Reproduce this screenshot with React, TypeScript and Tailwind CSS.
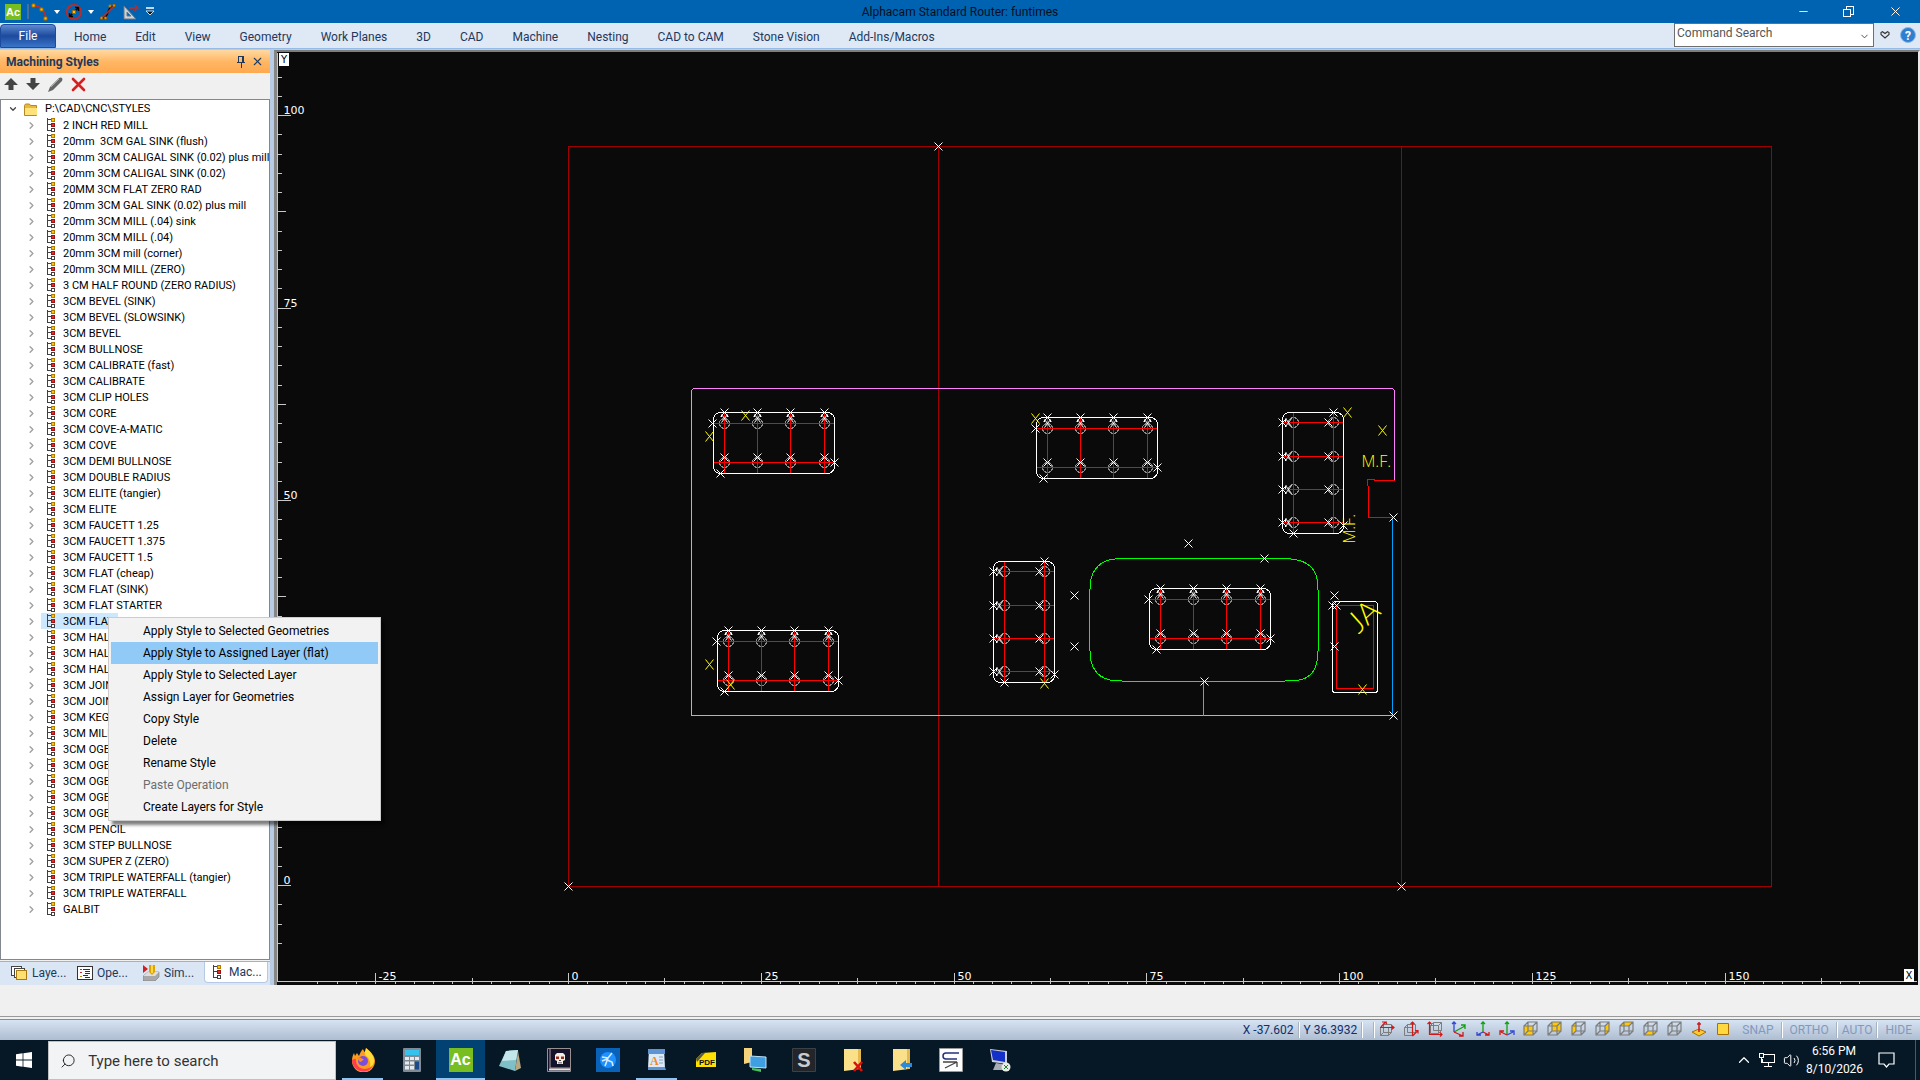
import { Fragment, ReactNode } from 'react'
import { ChevronDown, ChevronRight, ChevronUp, Minus, Search, Volume2, X } from 'lucide-react'

const ribbonTabs = [
  'Home', 'Edit', 'View', 'Geometry', 'Work Planes', '3D', 'CAD', 'Machine', 'Nesting',
  'CAD to CAM', 'Stone Vision', 'Add-Ins/Macros',
]

const styles = [
  '2 INCH RED MILL',
  '20mm  3CM GAL SINK (flush)',
  '20mm 3CM CALIGAL SINK (0.02) plus mill',
  '20mm 3CM CALIGAL SINK (0.02)',
  '20MM 3CM FLAT ZERO RAD',
  '20mm 3CM GAL SINK (0.02) plus mill',
  '20mm 3CM MILL (.04) sink',
  '20mm 3CM MILL (.04)',
  '20mm 3CM mill (corner)',
  '20mm 3CM MILL (ZERO)',
  '3 CM HALF ROUND (ZERO RADIUS)',
  '3CM BEVEL (SINK)',
  '3CM BEVEL (SLOWSINK)',
  '3CM BEVEL',
  '3CM BULLNOSE',
  '3CM CALIBRATE (fast)',
  '3CM CALIBRATE',
  '3CM CLIP HOLES',
  '3CM CORE',
  '3CM COVE-A-MATIC',
  '3CM COVE',
  '3CM DEMI BULLNOSE',
  '3CM DOUBLE RADIUS',
  '3CM ELITE (tangier)',
  '3CM ELITE',
  '3CM FAUCETT 1.25',
  '3CM FAUCETT 1.375',
  '3CM FAUCETT 1.5',
  '3CM FLAT (cheap)',
  '3CM FLAT (SINK)',
  '3CM FLAT STARTER',
  '3CM FLAT',
  '3CM HAL',
  '3CM HAL',
  '3CM HAL',
  '3CM JOIN',
  '3CM JOIN',
  '3CM KEG',
  '3CM MILL',
  '3CM OGE',
  '3CM OGE',
  '3CM OGE',
  '3CM OGE',
  '3CM OGE',
  '3CM PENCIL',
  '3CM STEP BULLNOSE',
  '3CM SUPER Z (ZERO)',
  '3CM TRIPLE WATERFALL (tangier)',
  '3CM TRIPLE WATERFALL',
  'GALBIT',
]

const menuItems = [
  'Apply Style to Selected Geometries',
  'Apply Style to Assigned Layer (flat)',
  'Apply Style to Selected Layer',
  'Assign Layer for Geometries',
  'Copy Style',
  'Delete',
  'Rename Style',
  'Paste Operation',
  'Create Layers for Style',
]

/* ---------- title bar ---------- */

function AcLogo({ className }: { className: string }) {
  return (
    <span className={`flex items-center justify-center bg-[#78be20] font-['Liberation_Sans'] font-bold text-white ${className}`}>
      Ac
    </span>
  )
}

function SmallCaret() {
  return (
    <svg width="6" height="4" viewBox="0 0 6 4" className="fill-white">
      <path d="M0 0h6L3 4z" />
    </svg>
  )
}

function TitleBar() {
  return (
    <header className="relative flex h-[23px] items-center bg-[#0063b1]">
      <div className="flex items-center pl-[5px]">
        <AcLogo className="size-4 text-[11px]" />
        <span className="ml-1.5 h-[15px] w-0.5 border border-[#4a6f9c] bg-[#0a4f92]" />
        <button aria-label="Arc" className="ml-0.5">
          <svg width="18" height="18" viewBox="0 0 18 18" fill="none">
            <path d="M3 3c7 0 11 5 12 13" stroke="#c22a24" strokeWidth="1.6" />
            <path d="M1 1h3v3H1zM9 5h3v3H9zM13 14h3v3h-3z" fill="#ffc400" stroke="#a86800" />
          </svg>
        </button>
        <button aria-label="Arc options" className="mx-[5px]"><SmallCaret /></button>
        <button aria-label="Circle">
          <svg width="18" height="18" viewBox="0 0 18 18" fill="none">
            <circle cx="9" cy="9" r="7.2" stroke="#c22a24" strokeWidth="1.8" />
            <path d="M5 13l8-8M10 4.5h3.5V8M4.5 10v3.5H8" stroke="#000" strokeWidth="1.4" />
            <path d="M7.5 7.5h3v3h-3z" fill="#ffc400" stroke="#a86800" />
          </svg>
        </button>
        <button aria-label="Circle options" className="mx-[5px]"><SmallCaret /></button>
        <button aria-label="Spline">
          <svg width="18" height="18" viewBox="0 0 18 18" fill="none">
            <path d="M2 15c5 0 6-3 7-6s3-6 6-6" stroke="#000" strokeWidth="1.6" />
            <path d="M3 15L15 3" stroke="#c22a24" strokeWidth="1.6" />
            <path d="M1.5 14h2v2h-2zM14 1.5h2v2h-2zM5.5 14h2v2h-2zM10 2h2v2h-2z" fill="#ffc400" stroke="#a86800" />
          </svg>
        </button>
        <button aria-label="Set square" className="ml-[5px]">
          <svg width="18" height="18" viewBox="0 0 18 18" fill="none">
            <path d="M2 3v13h12z" fill="#c9d2dc" stroke="#6b7683" />
            <path d="M5 9v4h4z" fill="#0063b1" stroke="#6b7683" />
            <path d="M7 5h7M12.5 2L16 5l-3.5 3" stroke="#c22a24" strokeWidth="1.4" />
          </svg>
        </button>
        <button aria-label="Customize toolbar" className="ml-1.5">
          <svg width="8" height="9" viewBox="0 0 8 9">
            <path d="M0 1h8" stroke="#fff" strokeWidth="1.5" />
            <path d="M0 4h8L4 8z" fill="#111" stroke="#fff" strokeWidth=".8" />
          </svg>
        </button>
      </div>
      <h1 className="pointer-events-none absolute inset-x-0 text-center text-[12px] text-[#04101f]">
        Alphacam Standard Router: funtimes
      </h1>
      <div className="ml-auto flex h-full items-center text-white">
        <button aria-label="Minimize" className="flex w-[45px] justify-center"><Minus size={13} strokeWidth={1.6} /></button>
        <button aria-label="Restore" className="flex w-[45px] justify-center">
          <svg width="11" height="11" viewBox="0 0 11 11" fill="none" stroke="#fff" shapeRendering="crispEdges">
            <path d="M.5 3h7v7.5h-7zM3 3V.5h7.5V8H8" />
          </svg>
        </button>
        <button aria-label="Close" className="flex w-[49px] justify-center"><X size={15} strokeWidth={1.6} /></button>
      </div>
    </header>
  )
}

/* ---------- ribbon ---------- */

function Ribbon() {
  return (
    <nav className="flex h-[26px] items-start border-b border-[#96bbe6] bg-[#dfe8f5]">
      <button className="mt-px h-6 w-14 rounded-t-sm border border-[#1c4a9c] bg-linear-to-b from-[#5d8ad0] via-[#1d4a9d] to-[#3a75c8] text-[12px] text-white">
        File
      </button>
      <div className="flex h-full items-center gap-px pt-0.5 pl-1">
        {ribbonTabs.map((tab) => (
          <button key={tab} className="px-[14px] text-[12px] leading-6 whitespace-nowrap text-[#1e395b]">{tab}</button>
        ))}
      </div>
      <div className="ml-auto flex items-center gap-1.5 pr-1">
        <div className="relative flex">
          <select
            aria-label="Command Search"
            className="h-6 w-[200px] appearance-none border border-[#6e6e6e] bg-white pb-1 pl-0.5 text-[12px] text-[#555]"
          >
            <option>Command Search</option>
          </select>
          <ChevronDown size={11} className="absolute top-2 right-1 text-[#444]" />
        </div>
        <button aria-label="Ribbon options">
          <svg width="10" height="8" viewBox="0 0 10 8" fill="none" stroke="#333" strokeWidth="1.1">
            <path d="M1 1.5L2.5.7 5 2.5 7.5.7 9 1.5v2L5 7 1 3.5z" />
          </svg>
        </button>
        <button aria-label="Help" className="ml-1">
          <svg width="16" height="16" viewBox="0 0 16 16">
            <circle cx="8" cy="8" r="7.5" fill="#2f7fd0" stroke="#8db9e6" />
            <text x="8" y="12.5" textAnchor="middle" fill="#fff" fontSize="12" fontWeight="700">?</text>
          </svg>
        </button>
      </div>
    </nav>
  )
}

/* ---------- machining styles panel ---------- */

function StyleIcon() {
  return (
    <svg width="9" height="16" viewBox="0 0 9 16" shapeRendering="crispEdges" className="shrink-0">
      <path d="M.5 1v12.5H5M.5 2.5H5M.5 7.5H5" fill="none" stroke="#404040" />
      <path d="M4.5 1.5h3v3h-3z" fill="#ffc400" stroke="#b07a00" />
      <path d="M4.5 6.5h3v3h-3z" fill="#e03030" stroke="#a01010" />
      <path d="M4.5 11.5h3v3h-3z" fill="#fff" stroke="#404040" />
    </svg>
  )
}

function FolderIcon() {
  return (
    <svg width="14" height="13" viewBox="0 0 14 13" className="shrink-0">
      <path d="M.5 12.5V2.5l1-1.5h4l1 1.5h6v10z" fill="#e8b93c" stroke="#b48a20" />
      <path d="M1 5h12v7H1z" fill="#ffe27a" />
    </svg>
  )
}

function ContextMenu() {
  return (
    <ul role="menu" className="absolute top-1 left-[107px] z-10 w-[273px] border border-[#ccc] bg-[#f2f2f2] p-0.5 shadow-[4px_4px_3px_rgba(0,0,0,0.5)]">
      {menuItems.map((item, i) => (
        <li key={item}>
          <button
            role="menuitem"
            disabled={item === 'Paste Operation'}
            className={`h-[22px] w-full pl-8 text-left text-[12px] whitespace-nowrap disabled:text-[#6d6d6d] ${i === 1 ? 'bg-[#91c9f7]' : ''}`}
          >
            {item}
          </button>
        </li>
      ))}
    </ul>
  )
}

const panelTabs: { label: string; icon: ReactNode }[] = [
  {
    label: 'Laye...',
    icon: (
      <svg width="17" height="16" viewBox="0 0 17 16" shapeRendering="crispEdges">
        <path d="M.5 1.5h10v9H.5z" fill="#fff" stroke="#444" />
        <path d="M3.5 3.5h10v9h-10z" fill="#fff" stroke="#444" />
        <path d="M5.5 5.5h10v9h-10z" fill="#ffdf70" stroke="#a87a10" />
      </svg>
    ),
  },
  {
    label: 'Ope...',
    icon: (
      <svg width="16" height="14" viewBox="0 0 16 14" shapeRendering="crispEdges">
        <path d="M.5.5h15v13H.5z" fill="#fff" stroke="#333" />
        <path d="M3 3.5h2M3 6.5h2" stroke="#d02020" />
        <path d="M3 10.5h2" stroke="#c08000" />
        <path d="M6 3.5h7M8 5.5h5M8 7.5h5M6 9.5h5M8 11.5h5" stroke="#333" />
      </svg>
    ),
  },
  {
    label: 'Sim...',
    icon: (
      <svg width="17" height="16" viewBox="0 0 17 16">
        <path d="M0 0l5 4-5 4z" fill="#d02020" />
        <path d="M0 11l5-4h11v5l-4 4H0z" fill="#a8a8a8" stroke="#777" strokeWidth=".6" />
        <path d="M0 11l5-4h11l-4 4z" fill="#dedede" />
        <path d="M6 0h6v7l-3 3-3-3z" fill="#e0a400" />
        <path d="M8 0h2v8H8z" fill="#ffd84a" />
      </svg>
    ),
  },
  { label: 'Mac...', icon: <StyleIcon /> },
]

function StylesPanel() {
  return (
    <aside className="flex w-[270px] shrink-0 flex-col bg-[#f0f0f0]">
      <div className="flex h-[23px] items-center bg-linear-to-b from-[#ffd9a0] via-[#ffb765] to-[#ffa94f] pr-1.5 pl-[6px]">
        <h2 className="text-[12px] font-bold text-[#1e395b]">Machining Styles</h2>
        <button aria-label="Pin" className="ml-auto">
          <svg width="8" height="12" viewBox="0 0 8 12" fill="none" stroke="#1e395b" shapeRendering="crispEdges">
            <path d="M1.5 6V.5h5V6M5.5 1v5M0 6.5h8M4 7v5" />
          </svg>
        </button>
        <button aria-label="Close panel" className="ml-1.5"><X size={13} className="text-[#1e395b]" /></button>
      </div>
      <div className="flex h-[26px] items-center gap-2 pb-1 pl-1 text-[#444]">
        <button aria-label="Move up">
          <svg width="14" height="14" viewBox="0 0 14 14" fill="#444"><path d="M7 1l7 7H9.500v5h-5V8H0z" /></svg>
        </button>
        <button aria-label="Move down">
          <svg width="14" height="14" viewBox="0 0 14 14" fill="#444"><path d="M7 13l7-7H9.500V1h-5v5H0z" /></svg>
        </button>
        <button aria-label="Edit style">
          <svg width="15" height="15" viewBox="0 0 15 15">
            <path d="M0 15l2-5 9-9q2-1 3 0t0 3l-9 9z" fill="#666" />
            <path d="M3 10l8-8" stroke="#aaa" />
          </svg>
        </button>
        <button aria-label="Delete style">
          <svg width="15" height="15" viewBox="0 0 15 15" stroke="#d81e1e" strokeWidth="2.6" strokeLinecap="round">
            <path d="M2 2l11 11M13 2L2 13" />
          </svg>
        </button>
      </div>
      <div className="flex-1 border border-[#828790] bg-white py-px text-[11px] leading-[18px] text-black">
        <div className="flex h-4 items-center pl-[7px]">
          <ChevronDown size={10} strokeWidth={3} className="text-[#444]" />
          <span className="ml-1.5"><FolderIcon /></span>
          <span className="ml-[7px]">P:\CAD\CNC\STYLES</span>
        </div>
        <ul>
          {styles.map((name, i) => (
            <li key={i} className="relative flex h-4 items-center pl-[25px]">
              <ChevronRight size={11} strokeWidth={3} className="shrink-0 text-[#a0a0a0]" />
              <span className={`ml-1 flex h-4 items-center pr-1 pl-1.5 ${name === '3CM FLAT' ? 'bg-[#cce8ff]' : ''}`}>
                <StyleIcon />
                <span className="ml-[7px] pt-px whitespace-pre">{name}</span>
              </span>
              {name === '3CM FLAT' && <ContextMenu />}
            </li>
          ))}
        </ul>
      </div>
      <div className="mt-px flex h-[24px] border-t border-[#8fb4e8] bg-[#dbe6f4] pl-1.5">
        {panelTabs.map((tab, i) => (
          <button
            key={tab.label}
            className={`flex h-[21px] items-center text-[12px] text-[#1e395b] ${i === 3 ? 'mr-0.5 flex-1 gap-[7px] rounded-b border border-t-0 border-[#b5c9e4] bg-white pl-2' : 'w-[66px] gap-1 pl-[5px]'}`}
          >
            {tab.icon}
            {tab.label}
          </button>
        ))}
      </div>
    </aside>
  )
}

/* ---------- drawing area ---------- */

const ORIGIN_X = 568
const ORIGIN_Y = 885
const UNIT_X = 7.71
const UNIT_Y = 7.7

function Cross({ x, y, color = '#fff', w = 4, h = 4 }: { x: number; y: number; color?: string; w?: number; h?: number }) {
  return (
    <path
      d={`M${x - w} ${y - h}L${x + w} ${y + h}M${x + w} ${y - h}L${x - w} ${y + h}`}
      stroke={color}
      shapeRendering="geometricPrecision"
    />
  )
}

function YellowMark({ x, y }: { x: number; y: number }) {
  return <Cross x={x} y={y} color="#ff0" h={5} />
}

// suction pod layout, 4 x 2 holes
function PodWide({ x, y }: { x: number; y: number }) {
  const cols = [11, 44, 77, 111]
  return (
    <g transform={`translate(${x} ${y})`}>
      {cols.map((c) => (
        <Fragment key={c}>
          <circle cx={c} cy="11" r="5" stroke="#8c8c8c" />
          <circle cx={c} cy="50" r="5" stroke="#8c8c8c" />
          <path d={`M${c} 0V61`} stroke="#f00" />
        </Fragment>
      ))}
      <path d="M0 11H121M0 50H121" stroke="#f00" />
      <rect width="121" height="61" rx="7" stroke="#fff" />
      {cols.map((c) => (
        <Fragment key={c}>
          <Cross x={c} y={0} />
          <Cross x={c} y={6} w={3} />
          <Cross x={c} y={45} />
          <path d={`M${c - 3} 2v2M${c + 3} 2v2`} stroke="#fff" />
        </Fragment>
      ))}
      <Cross x={-1} y={11} />
      <Cross x={121} y={50} />
      <Cross x={7} y={61} />
    </g>
  )
}

function PodTall({ x, y }: { x: number; y: number }) {
  const rows = [10, 44, 77, 110]
  return (
    <g transform={`translate(${x} ${y})`}>
      {rows.map((r) => (
        <Fragment key={r}>
          <circle cx="11" cy={r} r="5" stroke="#8c8c8c" />
          <circle cx="51" cy={r} r="5" stroke="#8c8c8c" />
          <path d={`M0 ${r}H61`} stroke="#f00" />
        </Fragment>
      ))}
      <path d="M11 0V121M51 0V121" stroke="#f00" />
      <rect width="61" height="121" rx="7" stroke="#fff" />
      {rows.map((r) => (
        <Fragment key={r}>
          <Cross x={0} y={r} />
          <Cross x={6} y={r} w={3} />
          <Cross x={46} y={r} />
          <path d={`M3 ${r - 3}v2M3 ${r + 2}v2`} stroke="#fff" />
        </Fragment>
      ))}
      <Cross x={51} y={0} />
      <Cross x={61} y={113} />
      <Cross x={11} y={121} />
    </g>
  )
}

function Rulers() {
  const yTicks = Array.from({ length: 46 }, (_, i) => i - 3)
  const xTicks = Array.from({ length: 81 }, (_, i) => i - 13)
  return (
    <g stroke="#c8c8c8">
      <path d="M277 52V981H1916" />
      {yTicks.map((i) => {
        const y = Math.round(ORIGIN_Y - i * 2.5 * UNIT_Y)
        const len = i % 10 === 0 ? 13 : i % 5 === 0 ? 8 : 4
        return <path key={i} d={`M277 ${y}h${len}`} />
      })}
      {xTicks.map((i) => {
        const x = Math.round(ORIGIN_X + i * 2.5 * UNIT_X)
        const top = i % 10 === 0 ? 972 : i % 5 === 0 ? 977 : 981
        return <path key={i} d={`M${x} ${top}V983`} />
      })}
      <g fill="#fff" stroke="none" fontFamily="DejaVu Sans" fontSize="11">
        {[0, 50, 75, 100].map((v) => (
          <text key={v} x="283" y={Math.round(ORIGIN_Y - v * UNIT_Y) - 2}>{v}</text>
        ))}
        {[-25, 0, 25, 50, 75, 100, 125, 150].map((v) => (
          <text key={v} x={Math.round(ORIGIN_X + v * UNIT_X) + 3} y="979">{v}</text>
        ))}
      </g>
    </g>
  )
}

function Drawing() {
  return (
    <svg viewBox="277 52 1641 933" className="h-full w-full" fill="none" shapeRendering="crispEdges">
      <g transform="translate(.5 .5)">
        <Rulers />

        {/* slabs */}
        <path d="M568 146H1771V886H568ZM938 146V886M1401 146V886" stroke="#a00000" />

        {/* countertop outline */}
        <path d="M1393 715H691V390L693 388H1392L1394 390V480" stroke="#ff80ff" />
        <path d="M1394 480H1374V479H1367V485L1368 486V517H1393" stroke="#f00" />
        <path d="M1392 517V715" stroke="#00a0ff" />

        {/* sink cutout */}
        <path
          d="M1119 558H1288L1299 560C1312 564 1316 572 1317 581L1318 597V643L1317 658C1315 673 1306 680 1293 680L1277 681H1131L1112 680C1099 678 1092 669 1090 658L1089 643V597L1090 581C1092 568 1101 561 1110 559Z"
          stroke="#0f0"
        />
        <path d="M1203 681V715" stroke="#0f0" />

        <PodWide x={713} y={412} />
        <PodWide x={717} y={630} />
        <PodWide x={1036} y={417} />
        <PodWide x={1149} y={588} />
        <PodTall x={993} y={561} />
        <PodTall x={1282} y={412} />

        <rect x="1332" y="601" width="45" height="91" rx="3" stroke="#fff" />
        <path d="M1336 605H1373V688H1336Z" stroke="#f00" />

        {[
          [1074, 595], [1074, 646], [1188, 543], [1264, 558], [1204, 681], [1334, 595], [1334, 646],
          [1332, 605], [1336, 605], [1393, 517], [1393, 715], [938, 146], [568, 886], [1401, 886],
        ].map(([x, y]) => <Cross key={`${x}-${y}`} x={x} y={y} />)}

        {[
          [745, 415], [709, 436], [709, 664], [730, 684], [1035, 418], [1044, 683], [1347, 412],
          [1382, 430], [1362, 689],
        ].map(([x, y]) => <YellowMark key={`${x}-${y}`} x={x} y={y} />)}

        <g fill="#ff0" fontFamily="Open Sans" fontSize="16" fontWeight="300">
          <text x="1361" y="466">M.F.</text>
          <text transform="translate(1354 543) rotate(-90)">M.F.</text>
          <text transform="translate(1358 634) rotate(-42)" fontFamily="Lato" fontSize="30">JA</text>
        </g>
      </g>
    </svg>
  )
}

function Workspace() {
  return (
    <main className="relative min-w-0 flex-1 border-t-2 border-r-2 border-l-3 border-t-[#7d7d7d] border-r-[#e8e8e8] border-l-[#868686] bg-[#0a0a0a]">
      <Drawing />
      <span className="absolute top-px left-0.5 flex h-[13px] w-2.5 items-center justify-center bg-white font-['DejaVu_Sans'] text-[10px] text-black">Y</span>
      <span className="absolute right-1 bottom-[3px] flex h-[13px] w-2.5 items-center justify-center bg-white font-['DejaVu_Sans'] text-[10px] text-black">X</span>
    </main>
  )
}

/* ---------- status bar ---------- */

const faces = {
  front: 'M1 5h9v9H1z',
  back: 'M5 1h9v9H5z',
  left: 'M1 5l4-4v9l-4 4z',
  right: 'M10 5l4-4v9l-4 4z',
  top: 'M1 5l4-4h9l-4 4z',
  bottom: 'M1 14l4-4h9l-4 4z',
  none: '',
}

function Cube({ face, children }: { face: keyof typeof faces; children?: ReactNode }) {
  return (
    <svg width="16" height="16" viewBox="0 0 16 16" fill="none">
      <path d={faces[face]} fill="#ffc800" />
      <path d="M1 5h9v9H1zM5 1h9v9H5zM1 5l4-4M10 5l4-4M1 14l4-4M10 14l4-4" stroke="#7d7d7d" strokeWidth="1.2" />
      {children}
    </svg>
  )
}

// wire cube with a pair of work plane arrows over it
function PlaneCube({ cube, arrows }: { cube: string; arrows: string }) {
  return (
    <svg width="16" height="16" viewBox="0 0 16 16" fill="none">
      <path d={cube} stroke="#7d7d7d" />
      <path d={arrows} stroke="#d01818" strokeWidth="1.2" />
    </svg>
  )
}

function Axes({ blue, green, red }: { blue: string; green: string; red: string }) {
  return (
    <svg width="16" height="16" viewBox="0 0 16 16" fill="none" strokeWidth="1.3">
      <path d={blue} stroke="#3048d0" />
      <path d={green} stroke="#10a010" />
      <path d={red} stroke="#d01818" />
    </svg>
  )
}

const viewButtons: { label: string; icon: ReactNode }[] = [
  {
    label: 'Work plane XY',
    icon: <PlaneCube cube="M1.5 6.5h8v8h-8zM4.500 3.5h8v8h-8M4.500 3.5v8M9.500 14.500l3-3M1.500 14.500l3-3" arrows="M1 6.500h14M12.500 4.500l2.500 2-2.500 2M2 6l4-4.500M3 1h5M6 1l2 2" />,
  },
  {
    label: 'Work plane XZ',
    icon: <PlaneCube cube="M1.500 6.500h8v8h-8zM4.500 3.500h8v8h-8M4.500 3.500v8M1.500 6.500l3-3" arrows="M9.500 15V1M7.500 3l2-2 2 2M9.500 15l5-5M12 9.500h3v3" />,
  },
  {
    label: 'Work plane YZ',
    icon: <PlaneCube cube="M3.500 4.500h8v8h-8zM6.500 1.500h8v8h-8zM3.500 4.500l3-3M11.500 4.500l3-3M11.500 12.500l3-3" arrows="M2.500 1v12.500H15M.5 3l2-2 2 2M13 11.500l2 2-2 2" />,
  },
  { label: 'Axes 1', icon: <Axes blue="M3 11V1M1 3l2-2 2 2" green="M3 11l11-6M10 4h4v4" red="M3 11l9 4M12 11v4H8" /> },
  { label: 'Axes 2', icon: <Axes blue="M8 11l-6 3M2 11v3h4" green="M8 11V1M6 3l2-2 2 2" red="M8 11l6 3M14 11v3h-4" /> },
  { label: 'Axes 3', icon: <Axes blue="M8 14l6-3M11 10h4v4" green="M8 14V1M6 3l2-2 2 2" red="M8 14l-6-3M5 10H1v4" /> },
  { label: 'Front', icon: <Cube face="front" /> },
  { label: 'Back', icon: <Cube face="back" /> },
  { label: 'Left', icon: <Cube face="left" /> },
  { label: 'Right', icon: <Cube face="right" /> },
  { label: 'Top', icon: <Cube face="top" /> },
  { label: 'Bottom', icon: <Cube face="bottom" /> },
  { label: 'Wireframe', icon: <Cube face="none" /> },
  {
    label: 'Normal to plane',
    icon: (
      <svg width="16" height="16" viewBox="0 0 16 16">
        <path d="M1 11l7-3 7 3-7 4z" fill="#ffc830" stroke="#a87000" />
        <path d="M8 11V1M6 3h4" stroke="#d01818" strokeWidth="1.5" />
      </svg>
    ),
  },
  {
    label: 'Shaded',
    icon: (
      <svg width="16" height="16" viewBox="0 0 16 16">
        <path d="M2.5 2.5h11v11h-11z" fill="#ffd840" stroke="#a87000" />
      </svg>
    ),
  },
]

function Separator() {
  return <span className="h-4 w-0.5 border-l border-[#a9b3c0] bg-white" />
}

function StatusBar() {
  return (
    <footer>
      <div className="h-[31px] bg-[#f0f0f0]" />
      <div className="flex h-6 items-center justify-end border-t border-[#999] bg-linear-to-b from-[#dde9f8] to-[#aebdd1] pr-2 text-[12px] text-[#10306a] shadow-[inset_0_2px_0_#f0f0f0,inset_0_3px_0_#6f8fc4]">
        <div className="flex items-center gap-1 pt-0.5">
          <span>X -37.602</span>
          <Separator />
          <span>Y 36.3932</span>
          <Separator />
          <span className="w-0.5" />
          <Separator />
        </div>
        <div className="flex">
          {viewButtons.map((b) => (
            <button key={b.label} aria-label={b.label} className="flex w-6 justify-center">{b.icon}</button>
          ))}
        </div>
        <div className="flex items-center pt-0.5 text-[#8299bd]">
          <button className="px-[7px]">SNAP</button>
          <Separator />
          <button className="px-[7px]">ORTHO</button>
          <Separator />
          <button className="px-1">AUTO</button>
          <Separator />
          <button className="pl-[7px]">HIDE</button>
        </div>
      </div>
    </footer>
  )
}

/* ---------- taskbar ---------- */

const apps: { name: string; icon: ReactNode; running?: boolean; active?: boolean }[] = [
  {
    name: 'Firefox',
    running: true,
    icon: (
      <svg width="24" height="24" viewBox="0 0 24 24">
        <path d="M12 1c0 0 1 3 3 4 1-1 0-4-0-5 5 4 9 8 9 13a11.500 11.500 0 0 1-23 0c0-4 1-6 2-8l1 3 2-3 2 3c1-3 2-5 4-7z" fill="#ff9a1f" />
        <path d="M15 0c5 4 8 8 8 13 0 3-2 5-4 6 1-5-1-9-4-11-2-2-1-5 0-8z" fill="#ffdc3a" />
        <path d="M1 12c0 6 5 11.500 11.500 11.500 4 0 7-2 9-5-7 4-14 3-16-3l-1-5z" fill="#ff3d4e" />
        <circle cx="12" cy="13" r="5" fill="#7a4fe0" />
        <path d="M6 10c3-1 5 0 7 2-2 0-2 2-4 2z" fill="#ff8a1c" />
      </svg>
    ),
  },
  {
    name: 'Calculator',
    icon: (
      <svg width="24" height="24" viewBox="0 0 24 24">
        <rect x="3" width="18" height="24" rx="1" fill="#7f8a94" />
        <path d="M5 2h14v5H5z" fill="#35c3ee" />
        <path d="M5 9h4v3H5zM10 9h4v3h-4zM15 9h4v3h-4zM5 13.500h4v3H5zM10 13.500h4v3h-4zM5 18h4v3.500H5zM10 18h4v3.500h-4z" fill="#e5e9ed" />
        <path d="M15 13.500h4v8h-4z" fill="#1a4a8a" />
      </svg>
    ),
  },
  { name: 'Alphacam', running: true, active: true, icon: <AcLogo className="size-6 text-[16px]" /> },
  {
    name: 'Notepad',
    icon: (
      <svg width="24" height="24" viewBox="0 0 24 24">
        <path d="M20 3l3 17-6 3z" fill="#b8a880" />
        <path d="M8 3l12-1-3 21-16-5z" fill="#7fc0c8" />
        <path d="M8 3l12-1-2 10L4 13z" fill="#c3e6ea" />
      </svg>
    ),
  },
  {
    name: 'Skull book',
    icon: (
      <svg width="24" height="24" viewBox="0 0 24 24">
        <path d="M.5.5h23v23H.5z" fill="#14112b" stroke="#9a8f8f" />
        <path d="M3 1v19h20" fill="none" stroke="#b0a0a0" />
        <path d="M2 20.500h21v2H2z" fill="#e8e4e0" />
        <path d="M10 5h6l2 2v5l-2 1v3h-6v-3l-2-1V7z" fill="#f0ece6" />
        <path d="M9 8.500h3v2.500H9zM14 8.500h3v2.500h-3z" fill="#a02818" />
        <path d="M12 12h2v1h-2zM11 14.500h4v.8h-4z" fill="#333" />
      </svg>
    ),
  },
  {
    name: 'Kinetic',
    icon: (
      <svg width="24" height="24" viewBox="0 0 24 24">
        <path d="M0 0h24v24H0z" fill="#0a62b8" />
        <circle cx="12" cy="12" r="8" fill="#1e90ff" />
        <path d="M6 9l6 1 4-5M12 10l-3 8M11 12l5 2 1 4M6 13l5-2" fill="none" stroke="#d8ecff" strokeWidth="1.6" />
      </svg>
    ),
  },
  {
    name: 'WordPad',
    running: true,
    icon: (
      <svg width="20" height="24" viewBox="0 0 20 24">
        <path d="M2 1h15l1 19H1z" fill="#dce9f6" />
        <path d="M1 1h17v5H1zM1 19h17l1 3H1z" fill="#5f94d4" />
        <text x="3" y="17" fontSize="12" fontWeight="700" fontFamily="Liberation Serif" fill="#ec8a2a">A</text>
        <path d="M12 9h4M12 12h4M12 15h4" stroke="#8aa4c0" />
      </svg>
    ),
  },
  {
    name: 'PDF',
    icon: (
      <svg width="22" height="20" viewBox="0 0 22 20">
        <path d="M1 17V9l6-6 14-1v15z" fill="#ffe000" />
        <path d="M1 9l6-6h3L2 12z" fill="#5a5a50" />
        <text x="4" y="15" fontSize="8" fontWeight="700" fontFamily="Liberation Sans" fill="#111">PDF</text>
      </svg>
    ),
  },
  {
    name: 'Network share',
    icon: (
      <svg width="24" height="24" viewBox="0 0 24 24">
        <path d="M1 0h8v14l-8 2z" fill="#f6d37a" />
        <path d="M7 8l16 1v11l-16-1z" fill="#3f9fe0" stroke="#bfe2fa" />
        <path d="M9 20l9 1v3l-9-2z" fill="#45c060" />
      </svg>
    ),
  },
  {
    name: 'S editor',
    icon: (
      <svg width="24" height="24" viewBox="0 0 24 24">
        <path d="M.5.5h23v23H.5z" fill="#22262a" stroke="#3c4146" />
        <text x="12" y="19" textAnchor="middle" fontSize="20" fontWeight="700" fontFamily="Liberation Sans" fill="#c8ccd0">S</text>
      </svg>
    ),
  },
  {
    name: 'Folder delete',
    icon: (
      <svg width="22" height="24" viewBox="0 0 22 24">
        <path d="M2 1h16v20l-16 2z" fill="#fbe08a" />
        <path d="M16 1h3v20h-3z" fill="#e5b850" />
        <path d="M12 14l8 9M20 14l-8 9" stroke="#d81010" strokeWidth="2.6" />
      </svg>
    ),
  },
  {
    name: 'Folder restore',
    icon: (
      <svg width="22" height="24" viewBox="0 0 22 24">
        <path d="M2 1h16v20l-16 2z" fill="#fbe08a" />
        <path d="M16 1h3v20h-3z" fill="#e5b850" />
        <path d="M9 17l6-5v3h6v4h-6v3z" fill="#2c8ad8" />
      </svg>
    ),
  },
  {
    name: 'Path tool',
    icon: (
      <svg width="24" height="24" viewBox="0 0 24 24" fill="none">
        <path d="M.5.5h23v23H.5z" fill="#fdfdfd" stroke="#999" />
        <path d="M20 5H7Q4 5 4 8t3 3h11" stroke="#25307a" strokeWidth="1.5" />
        <path d="M4 14h14L6 20M18 14v5" stroke="#444" strokeWidth="1.3" />
      </svg>
    ),
  },
  {
    name: 'Remote desktop',
    icon: (
      <svg width="24" height="24" viewBox="0 0 24 24">
        <path d="M2 1l17 2v13L4 14z" fill="#c9ced6" />
        <path d="M3 2l14 2v10L5 12z" fill="#1530c8" />
        <path d="M8 15l6 1 2 6H5z" fill="#a8adb5" />
        <circle cx="18" cy="19" r="4.5" fill="#e8ece8" />
        <path d="M16 17l2 2-2 2M20 17l-2 2 2 2" stroke="#208030" fill="none" />
      </svg>
    ),
  },
]

function Taskbar() {
  return (
    <div className="flex h-10 items-center bg-[#061826] text-white">
      <button aria-label="Start" className="flex w-12 justify-center">
        <svg width="16" height="16" viewBox="0 0 16 16" fill="#fff">
          <path d="M0 2.200L6.600 1.300V7.600H0zM7.400 1.200L16 0V7.600H7.400zM0 8.400H6.600V14.700L0 13.800zM7.400 8.400H16V16L7.400 14.800z" />
        </svg>
      </button>
      <label className="flex h-[39px] w-72 items-center gap-3 self-end border border-[#c0c0c0] bg-[#f2f3f5] pl-[11px] text-[#222]">
        <Search size={18} strokeWidth={1.4} className="-scale-x-100" />
        <input aria-label="Type here to search" placeholder="Type here to search" className="w-full bg-transparent text-[15px] outline-none placeholder:text-[#333]" />
      </label>
      <div className="ml-0.5 flex h-full">
        {apps.map((app) => (
          <button
            key={app.name}
            aria-label={app.name}
            className={`relative flex w-[49px] items-center justify-center ${app.active ? 'bg-[#024272]' : ''}`}
          >
            {app.icon}
            {app.running && (
              <span className={`absolute bottom-0 h-0.5 bg-[#8cc4f4] ${app.active ? 'inset-x-0' : 'inset-x-1'}`} />
            )}
          </button>
        ))}
      </div>
      <div className="ml-auto flex h-full items-center">
        <button aria-label="Show hidden icons"><ChevronUp size={18} strokeWidth={1.6} /></button>
        <button aria-label="Network" className="ml-1.5">
          <svg width="16" height="14" viewBox="0 0 16 14" fill="none" stroke="#fff" shapeRendering="crispEdges">
            <path d="M5 1.500h10.500v8H3.500V6M9.500 10v3M5 13.500h8M.5.5h4v4h-4zM2.500 5v5" />
          </svg>
        </button>
        <button aria-label="Volume" className="ml-2"><Volume2 size={17} strokeWidth={1.4} /></button>
        <button className="ml-1.5 w-14 text-center text-[12px] leading-[18px] whitespace-nowrap">
          <span className="block">6:56 PM</span>
          <span className="block">8/10/2026</span>
        </button>
        <button aria-label="Notifications" className="ml-4">
          <svg width="17" height="16" viewBox="0 0 17 16" fill="none" stroke="#fff" strokeWidth="1.2">
            <path d="M1 1h15v11h-5l-2.500 3L6 12H1z" />
          </svg>
        </button>
        <span className="mr-1 ml-5 h-full w-px bg-[#4c5a66]" />
      </div>
    </div>
  )
}

export default function App() {
  return (
    <div className="flex h-screen flex-col bg-[#f0f0f0] font-['Roboto',sans-serif] leading-4">
      <TitleBar />
      <Ribbon />
      <div className="flex min-h-0 flex-1 bg-[#b9cce6] pt-px">
        <StylesPanel />
        <span className="w-1 shrink-0" />
        <Workspace />
      </div>
      <StatusBar />
      <Taskbar />
    </div>
  )
}
